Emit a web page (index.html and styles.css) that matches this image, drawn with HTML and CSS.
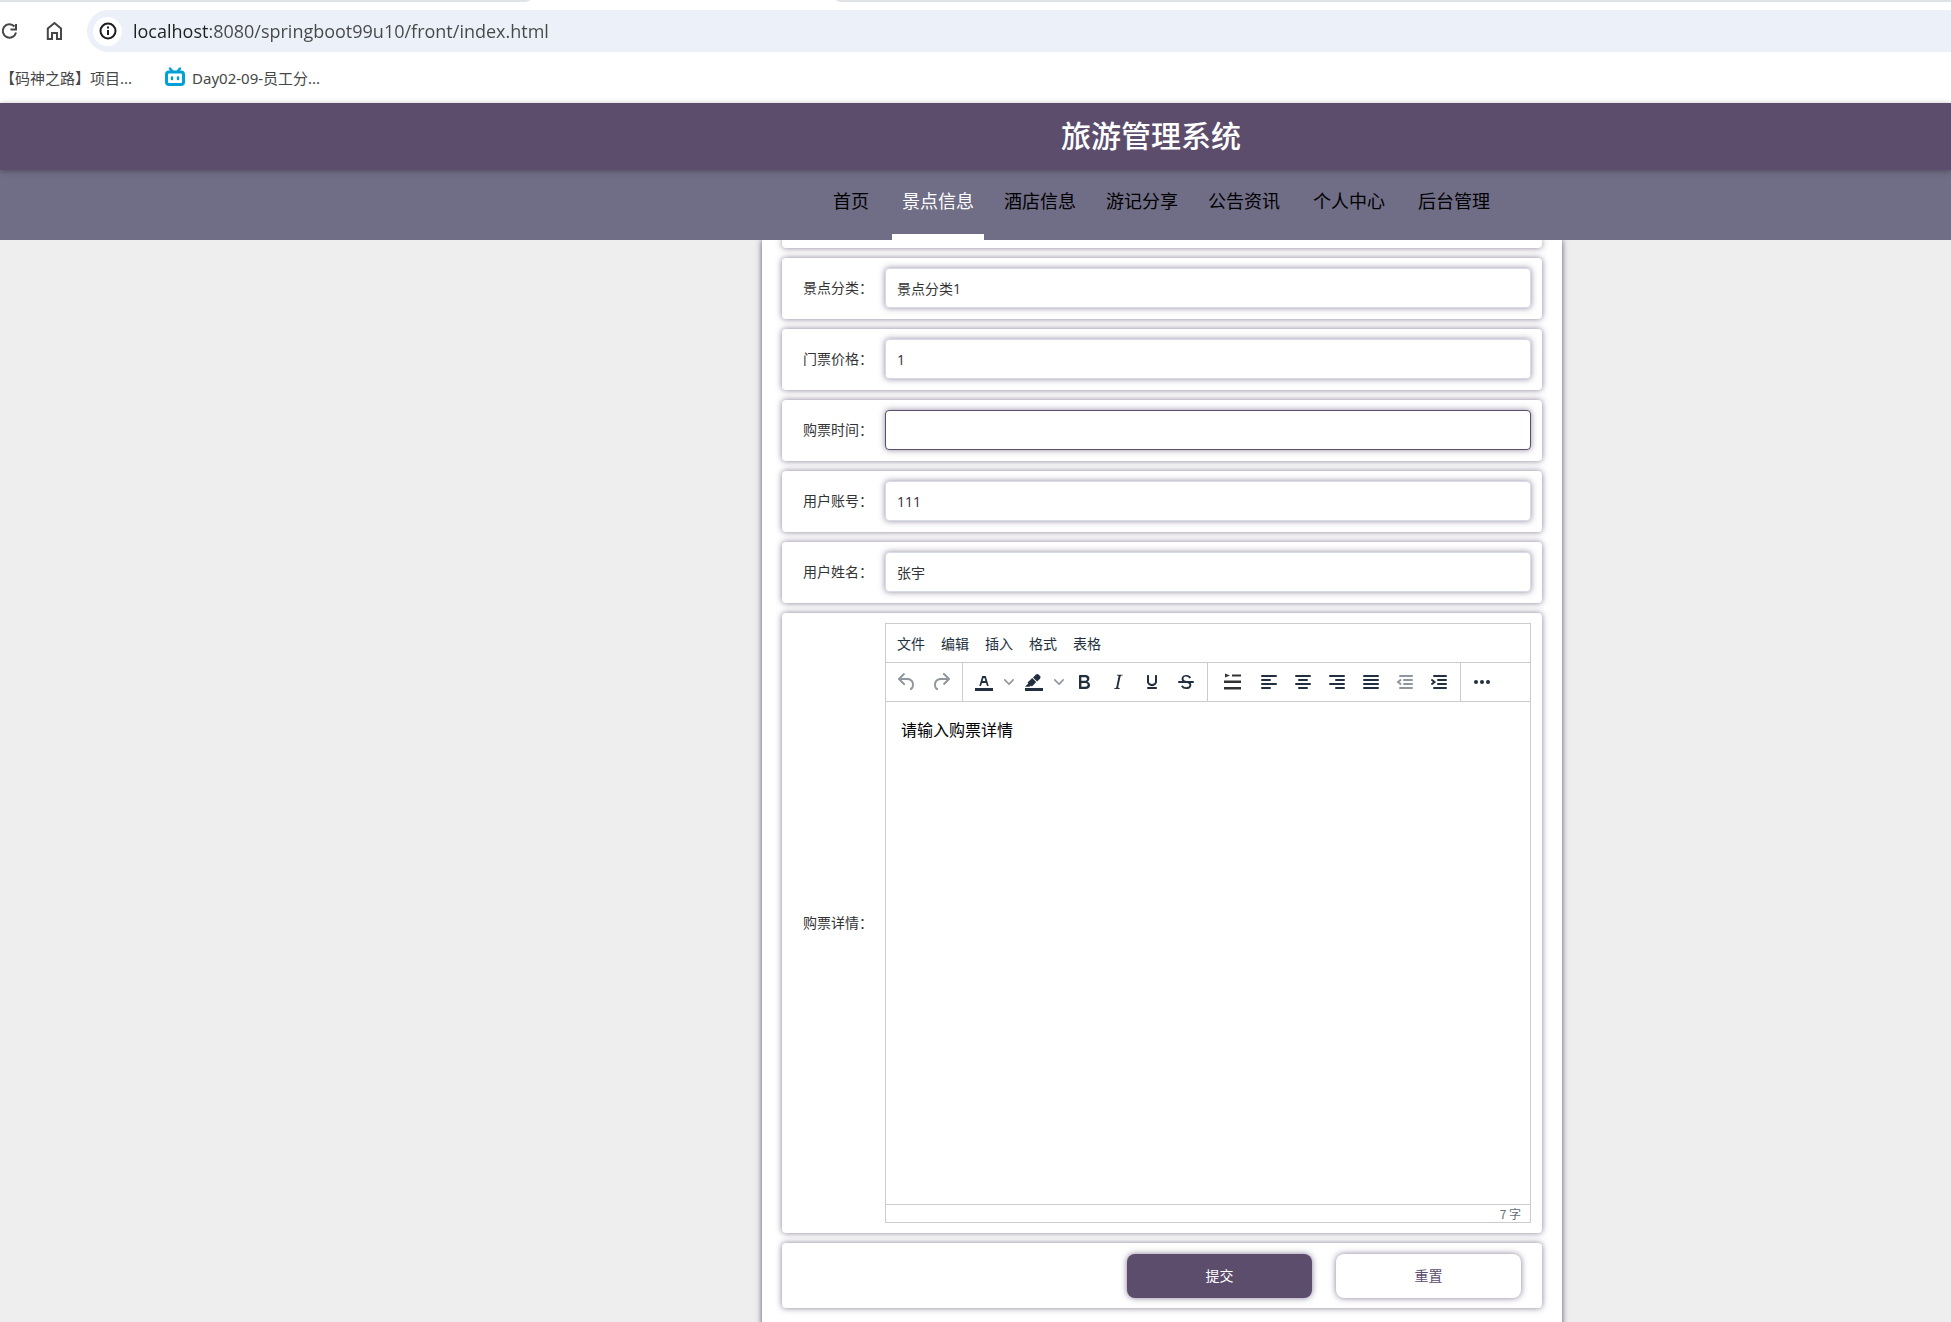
FILE: index.html
```html
<!DOCTYPE html>
<html lang="zh-CN">
<head>
<meta charset="utf-8">
<title>旅游管理系统</title>
<link rel="stylesheet" href="styles.css">
</head>
<body>
<div class="browser">
  <div class="tabs"><span class="tab tab--left"></span><span class="tab tab--right"></span></div>
  <div class="address-row">
    <button class="tool" aria-label="重新加载"><svg width="20" height="20" viewBox="0 0 20 20" fill="none" stroke="#474747" stroke-width="2"><path d="M14.500 5.500A6.700 6.700 0 1 0 16 11.500M16 3v5.500h-5.500"/></svg></button>
    <button class="tool" aria-label="主页"><svg width="20" height="20" viewBox="0 0 20 20" fill="none" stroke="#474747" stroke-width="2"><path d="M2.800 18V7.500L9.500 2l6.500 5.500V18h-4v-6H7v6z"/></svg></button>
    <div class="address">
      <span class="address__info"><svg width="20" height="20" viewBox="0 0 20 20" fill="none" stroke="#1f1f1f" stroke-width="2"><circle cx="10" cy="10" r="7.500"/><path d="M10 9v5M10 5.500v2"/></svg></span>
      <input class="address__url" aria-label="地址" value="localhost:8080/springboot99u10/front/index.html">
    </div>
  </div>
  <div class="bookmarks">
    <a class="bookmark" href="#">【码神之路】项目...</a>
    <a class="bookmark" href="#"><svg width="22" height="22" viewBox="0 0 22 22" fill="none" stroke="#00a1d6" stroke-width="3" stroke-linecap="round"><rect x="2.500" y="6" width="17" height="12.500" rx="2.500"/><path stroke-width="2.500" d="M6 2.500l2.500 3M16 2.500l-2.500 3M8 11.500v1.500M14 11.500v1.500"/></svg>Day02-09-员工分...</a>
  </div>
</div>

<header class="header"><h1 class="header__title">旅游管理系统</h1></header>
<nav class="nav">
  <a class="nav__item nav__item--spaced" href="#">首页</a>
  <a class="nav__item nav__item--active" href="#">景点信息</a>
  <a class="nav__item" href="#">酒店信息</a>
  <a class="nav__item" href="#">游记分享</a>
  <a class="nav__item" href="#">公告资讯</a>
  <a class="nav__item nav__item--spaced" href="#">个人中心</a>
  <a class="nav__item" href="#">后台管理</a>
</nav>

<main class="page">
  <form class="form">
    <div class="card card--cut"></div>
    <div class="card"><label class="label" for="category">景点分类：</label><input class="field" id="category" value="景点分类1"></div>
    <div class="card"><label class="label" for="price">门票价格：</label><input class="field" id="price" value="1"></div>
    <div class="card"><label class="label" for="time">购票时间：</label><input class="field field--active" id="time"></div>
    <div class="card"><label class="label" for="account">用户账号：</label><input class="field" id="account" value="111"></div>
    <div class="card"><label class="label" for="name">用户姓名：</label><input class="field" id="name" value="张宇"></div>
    <div class="card card--editor">
      <label class="label" for="detail">购票详情：</label>
      <div class="editor">
        <div class="editor__menu">
          <button type="button">文件</button><button type="button">编辑</button><button type="button">插入</button><button type="button">格式</button><button type="button">表格</button>
        </div>
        <div class="editor__bar">
          <div class="group">
            <button type="button" class="tb" disabled aria-label="撤销"><svg width="24" height="24"><path d="M6.4 8H12c3.7 0 6.2 2 6.8 5.1.6 2.7-.4 5.6-2.3 6.8a1 1 0 0 1-1-1.8c1.1-.6 1.8-2.7 1.4-4.6-.5-2.1-2.1-3.5-4.9-3.5H6.4l3.3 3.3a1 1 0 1 1-1.4 1.4l-5-5a1 1 0 0 1 0-1.4l5-5a1 1 0 0 1 1.4 1.4L6.4 8z"/></svg></button>
            <button type="button" class="tb" disabled aria-label="重做"><svg width="24" height="24"><path d="M17.6 10H12c-2.8 0-4.4 1.4-4.9 3.5-.4 2 .3 4 1.4 4.6a1 1 0 1 1-1 1.8c-2-1.2-2.9-4.1-2.3-6.8.6-3 3-5.1 6.8-5.1h5.6l-3.3-3.3a1 1 0 1 1 1.4-1.4l5 5a1 1 0 0 1 0 1.4l-5 5a1 1 0 0 1-1.4-1.4l3.3-3.3z"/></svg></button>
          </div>
          <div class="group">
            <button type="button" class="tb" aria-label="文字颜色"><svg width="24" height="24"><path d="M3 18h18v3H3z"/><path fill-rule="evenodd" d="M8.700 16h-.8a.5.5 0 0 1-.5-.6l2.700-9c.1-.3.3-.4.5-.4h2.800c.2 0 .4.1.5.4l2.700 9a.5.5 0 0 1-.5.6h-.8a.5.5 0 0 1-.4-.4l-.7-2.200c0-.3-.3-.4-.5-.4h-3.400c-.2 0-.4.1-.5.4l-.7 2.200c0 .3-.2.4-.4.4zm2.600-7.600l-.6 2a.5.5 0 0 0 .5.6h1.600a.5.5 0 0 0 .5-.6l-.6-2c0-.3-.3-.4-.5-.4h-.4c-.2 0-.4.1-.5.4z"/></svg></button>
            <button type="button" class="tb tb--arrow" aria-label="选择文字颜色"><svg width="10" height="10"><path d="M8.700 2.200c.3-.3.8-.3 1 0 .4.4.4.9 0 1.200L5.700 7.800c-.3.3-.9.3-1.200 0L.2 3.400a.8.8 0 0 1 0-1.200c.3-.3.8-.3 1.100 0L5 6l3.700-3.800z"/></svg></button>
            <button type="button" class="tb" aria-label="背景色"><svg width="24" height="24"><path d="M3 18h18v3H3z"/><path d="M7.700 16.700H3l3.300-3.300-.7-.8L10.200 8l4 4.100-4 4.200c-.2.2-.6.2-.8 0l-.6-.7-1.100 1.100zm5-7.500L11 7.400l3-2.900a2 2 0 0 1 2.600 0L18 6c.7.7.7 2 0 2.700l-2.900 2.900-1.800-1.800-.5-.6"/></svg></button>
            <button type="button" class="tb tb--arrow" aria-label="选择背景色"><svg width="10" height="10"><path d="M8.700 2.200c.3-.3.8-.3 1 0 .4.4.4.9 0 1.200L5.700 7.800c-.3.3-.9.3-1.200 0L.2 3.400a.8.8 0 0 1 0-1.200c.3-.3.8-.3 1.100 0L5 6l3.700-3.800z"/></svg></button>
            <button type="button" class="tb" aria-label="粗体"><svg width="24" height="24"><path fill-rule="evenodd" d="M7.800 19c-.3 0-.5 0-.6-.2l-.2-.5V5.700c0-.2 0-.4.2-.5l.6-.2h5c1.500 0 2.700.3 3.500 1 .7.6 1.100 1.400 1.100 2.500a3 3 0 0 1-.6 1.900c-.4.6-1 1-1.600 1.200.4.1.9.3 1.300.6s.8.7 1 1.200c.4.4.5 1 .5 1.600 0 1.300-.4 2.300-1.300 3-.8.7-2.100 1-3.800 1H7.800zm5-8.300c.6 0 1.200-.1 1.600-.5.4-.3.6-.7.6-1.300 0-1.100-.8-1.700-2.300-1.700H9.300v3.500h3.400zm.5 6c.7 0 1.300-.1 1.700-.4.4-.4.6-.9.6-1.500s-.2-1-.7-1.400c-.4-.3-1-.4-2-.4H9.400v3.800h4z"/></svg></button>
            <button type="button" class="tb" aria-label="斜体"><svg width="24" height="24"><path d="M16.700 4.700l-.1.9h-.3c-.6 0-1 0-1.400.3-.3.3-.4.6-.5 1.100l-2.100 9.800v.6c0 .5.4.8 1.400.8h.2l-.2.8H8l.2-.8h.2c1.100 0 1.800-.5 2-1.500l2-9.800.1-.5c0-.6-.4-.8-1.400-.8h-.3l.2-.9h5.800z"/></svg></button>
            <button type="button" class="tb" aria-label="下划线"><svg width="24" height="24"><path d="M16 5c.6 0 1 .4 1 1v5.500a4 4 0 0 1-.4 1.800l-1 1.400a5.300 5.300 0 0 1-5.500 1 5 5 0 0 1-1.600-1c-.5-.4-.8-.9-1.100-1.400a4 4 0 0 1-.4-1.800V6c0-.6.4-1 1-1s1 .4 1 1v5.500c0 .3 0 .6.2 1l.6.7a3.300 3.300 0 0 0 2.200.8 3.400 3.400 0 0 0 2.200-.8c.3-.2.4-.5.6-.8l.2-.9V6c0-.6.4-1 1-1zM8 17h8c.6 0 1 .4 1 1s-.4 1-1 1H8a1 1 0 0 1 0-2z"/></svg></button>
            <button type="button" class="tb" aria-label="删除线"><svg width="24" height="24"><path d="M15.600 8.500c-.5-.7-1-1.100-1.300-1.300-.6-.4-1.300-.6-2-.6-2.700 0-2.800 1.700-2.800 2.100 0 1.600 1.800 2 3.200 2.300 4.400.9 4.600 2.800 4.600 3.900 0 1.400-.7 4.100-5 4.100A6.200 6.200 0 0 1 7 16.400l1.500-1.100c.4.6 1.600 2 3.700 2 1.600 0 2.500-.4 3-1.200.4-.8.3-2-.8-2.600-.7-.4-1.600-.7-2.900-1-1-.2-3.900-.8-3.900-3.600C7.600 6 10.300 5 12.400 5c2.900 0 4.200 1.600 4.700 2.400l-1.500 1.100z"/><path d="M5 11h14a1 1 0 0 1 0 2H5a1 1 0 0 1 0-2z"/></svg></button>
          </div>
          <div class="group">
            <button type="button" class="tb tb--wide" aria-label="首行缩进"><svg width="24" height="24" fill="#333"><path d="M5 3.500l5 2-5 2zM12 4.500h9v2h-9zM4 10.500h17V13H4zM4 17h17v2.500H4z"/></svg></button>
            <button type="button" class="tb" aria-label="左对齐"><svg class="lines" width="24" height="24"><path d="M5 6h14M5 10h8M5 14h14M5 18h8"/></svg></button>
            <button type="button" class="tb" aria-label="居中对齐"><svg class="lines" width="24" height="24"><path d="M5 6h14M8 10h8M5 14h14M8 18h8"/></svg></button>
            <button type="button" class="tb" aria-label="右对齐"><svg class="lines" width="24" height="24"><path d="M5 6h14M11 10h8M5 14h14M11 18h8"/></svg></button>
            <button type="button" class="tb" aria-label="两端对齐"><svg class="lines" width="24" height="24"><path d="M5 6h14M5 10h14M5 14h14M5 18h14"/></svg></button>
            <button type="button" class="tb" disabled aria-label="减少缩进"><svg class="lines" width="24" height="24"><path d="M7 6h12M11 10h8M11 14h8M7 18h12M7.500 10L5 12l2.500 2"/></svg></button>
            <button type="button" class="tb" aria-label="增加缩进"><svg class="lines" width="24" height="24"><path d="M7 6h12M11 10h8M11 14h8M7 18h12M5 10l2.500 2L5 14"/></svg></button>
          </div>
          <div class="group">
            <button type="button" class="tb" aria-label="更多"><svg width="24" height="24"><circle cx="6" cy="12" r="2"/><circle cx="12" cy="12" r="2"/><circle cx="18" cy="12" r="2"/></svg></button>
          </div>
        </div>
        <textarea class="editor__text" id="detail">请输入购票详情</textarea>
        <div class="editor__status">7 字</div>
      </div>
    </div>
    <div class="card card--actions">
      <button type="button" class="btn btn--primary">提交</button>
      <button type="reset" class="btn">重置</button>
    </div>
  </form>
</main>
</body>
</html>
```
FILE: styles.css
```css
* { box-sizing: border-box; }

:root {
  --purple: #5c4d6d;
  --ink: #222f3e;
  --line: #ccc;
  --offset: 373px;
}

html, body { height: 100%; }

body {
  margin: 0;
  display: flex;
  flex-direction: column;
  overflow: hidden;
  background: #eee;
  color: #333;
  font-family: "Noto Sans CJK SC", sans-serif;
  font-size: 14px;
}

button, input, textarea { font: inherit; color: inherit; }
button { margin: 0; padding: 0; border: 0; background: none; }
a { color: inherit; text-decoration: none; }
svg { display: block; }

/* Browser chrome */
.browser { flex: none; height: 103px; background: #fff; color: #474747; }
.tabs { display: flex; justify-content: space-between; height: 2px; }
.tab { background: #dfe3e8; }
.tab--left { width: 530px; border-bottom-right-radius: 8px 2px; }
.tab--right { width: calc(100% - 836px); border-bottom-left-radius: 8px 2px; }
.address-row { display: flex; align-items: center; padding-top: 8px; }
.tool { width: 20px; margin-right: 25px; }
.tool:last-of-type { margin-right: 22px; }
.address {
  flex: 1;
  display: flex;
  align-items: center;
  gap: 11px;
  height: 42px;
  padding-left: 6px;
  border-radius: 21px 0 0 21px;
  background: #ebf0f9;
}
.address__info {
  display: grid;
  place-items: center;
  width: 29px;
  height: 29px;
  border-radius: 50%;
  background: #fff;
}
.address__url {
  flex: 1;
  padding: 0;
  border: 0;
  outline: 0;
  background: linear-gradient(90deg, #1f1f1f 76px, #474747 76px);
  background-clip: text;
  color: transparent;
  font-family: "Open Sans", sans-serif;
  font-size: 18px;
}
.bookmarks { display: flex; align-items: center; gap: 32px; height: 51px; padding-bottom: 1px; }
.bookmark { display: flex; align-items: center; gap: 6px; font-family: "Noto Sans", "Noto Sans CJK SC", sans-serif; font-size: 15px; }

/* Site header */
.header {
  flex: none;
  position: relative;
  display: grid;
  place-items: center;
  height: 67px;
  padding: 0 0 6px calc(var(--offset) - 22px);
  background: var(--purple);
  box-shadow: 0 1px 6px rgba(0, 0, 0, .3);
}
.header__title { margin: 0; color: #fff; font-size: 30px; font-weight: 500; line-height: 40px; }
.nav {
  flex: none;
  display: flex;
  justify-content: center;
  gap: 10px;
  height: 70px;
  padding: 0 4px 0 var(--offset);
  background: #706d86;
}
.nav__item {
  padding: 0 10px 4px;
  border-bottom: 6px solid transparent;
  color: #000;
  font-size: 18px;
  line-height: 60px;
}
.nav__item--active { border-color: #fff; color: #fff; }
.nav__item--spaced { margin: 0 3px; }

/* Form */
.page { flex: 1; min-height: 0; overflow: hidden; padding-left: var(--offset); }
.form {
  display: flex;
  flex-direction: column;
  gap: 10px;
  max-width: 800px;
  min-height: 100%;
  margin: 0 auto;
  padding: 0 20px 20px;
  background: #fff;
  box-shadow: 0 0 6px var(--purple);
}
.card {
  display: flex;
  align-items: center;
  padding: 10px 11px 11px 21px;
  border-radius: 4px;
  box-shadow: 0 0 6px rgba(92, 77, 109, .75);
}
.card--cut { height: 8px; padding: 0; border-radius: 0 0 4px 4px; }
.card--editor { padding-bottom: 10px; }
.card--actions { justify-content: flex-end; gap: 24px; padding: 11px 21px 10px; }
.label { flex: none; width: 82px; padding-bottom: 2px; }
.field {
  flex: 1;
  min-width: 0;
  height: 40px;
  padding: 0 11px;
  border: 1px solid #d6dae6;
  border-radius: 4px;
  outline: 0;
  background: #fff;
  box-shadow: 0 0 6px rgba(92, 77, 109, .65);
  font-family: "Open Sans", "Noto Sans CJK SC", sans-serif;
}
.field--active { border-color: var(--purple); }

/* Rich text editor */
.editor {
  flex: 1;
  min-width: 0;
  display: flex;
  flex-direction: column;
  height: 600px;
  border: 1px solid var(--line);
  color: var(--ink);
}
.editor__menu { display: flex; gap: 16px; height: 38px; padding: 0 11px; }
.editor__bar { display: flex; height: 40px; border: solid var(--line); border-width: 1px 0; }
.group { display: flex; align-items: center; padding: 0 4px; border-right: 1px solid var(--line); }
.group:last-child { border-right: 0; }
.tb { display: grid; place-items: center; width: 34px; height: 34px; fill: var(--ink); stroke: var(--ink); stroke-width: 0; }
.tb--arrow { width: 16px; opacity: .5; }
.tb--wide { width: 40px; }
.tb:disabled { opacity: .5; }
.lines { fill: none; stroke-width: 2px; stroke-linecap: round; }
.editor__text {
  flex: 1;
  padding: 15px;
  border: 0;
  outline: 0;
  resize: none;
  background: #fff;
  color: #000;
  font-size: 16px;
  line-height: 24px;
}
.editor__status {
  height: 18px;
  padding-right: 9px;
  border-top: 1px solid var(--line);
  color: #646d78;
  font-size: 12px;
  line-height: 18px;
  text-align: right;
}

.btn {
  width: 185px;
  height: 44px;
  padding-bottom: 2px;
  border-radius: 8px;
  background: #fff;
  color: var(--purple);
  box-shadow: 0 0 6px rgba(92, 77, 109, .75);
}
.btn--primary { background: var(--purple); color: #fff; }
```
